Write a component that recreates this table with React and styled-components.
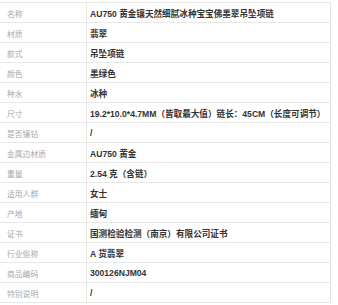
import React from "react";
import styled, { createGlobalStyle } from "styled-components";

const Global = createGlobalStyle`
  html, body { margin: 0; padding: 0; background: #ffffff; }
  body { font-family: "Liberation Sans", "Noto Sans CJK SC", sans-serif; }
`;

const Table = styled.div`
  margin-top: 2px;
  width: 331px;
  box-sizing: border-box;
  border-right: 1px solid #e2e2e2;
  border-bottom: 1px solid #e8e8e8;
`;

const Row = styled.div`
  display: grid;
  grid-template-columns: 87px 1fr;
  height: 20px;
  box-sizing: border-box;
  border-top: 1px solid #e8e8e8;
`;

const Label = styled.div`
  display: flex;
  align-items: center;
  padding-left: 7px;
  padding-top: 1px;
  border-right: 1px solid #e6e6e6;
  font-size: 7.8px;
  color: #a8a8a8;
  white-space: nowrap;
`;

const Value = styled.div`
  display: flex;
  align-items: center;
  padding-left: 3px;
  padding-top: 1px;
  font-size: 8.6px;
  font-weight: 700;
  color: #333333;
  white-space: nowrap;
`;

const rows = [
  ["名称", "AU750 黄金镶天然细腻冰种宝宝佛墨翠吊坠项链"],
  ["材质", "翡翠"],
  ["款式", "吊坠项链"],
  ["颜色", "墨绿色"],
  ["种水", "冰种"],
  ["尺寸", "19.2*10.0*4.7MM（皆取最大值）链长：45CM（长度可调节）"],
  ["是否镶钻", "/"],
  ["金属边材质", "AU750 黄金"],
  ["重量", "2.54 克（含链）"],
  ["适用人群", "女士"],
  ["产地", "缅甸"],
  ["证书", "国测检验检测（南京）有限公司证书"],
  ["行业俗称", "A 货翡翠"],
  ["商品编码", "300126NJM04"],
  ["特别说明", "/"],
];

export default function App() {
  return (
    <>
      <Global />
      <Table>
        {rows.map(([k, v]) => (
          <Row key={k}>
            <Label>{k}</Label>
            <Value>{v}</Value>
          </Row>
        ))}
      </Table>
    </>
  );
}
